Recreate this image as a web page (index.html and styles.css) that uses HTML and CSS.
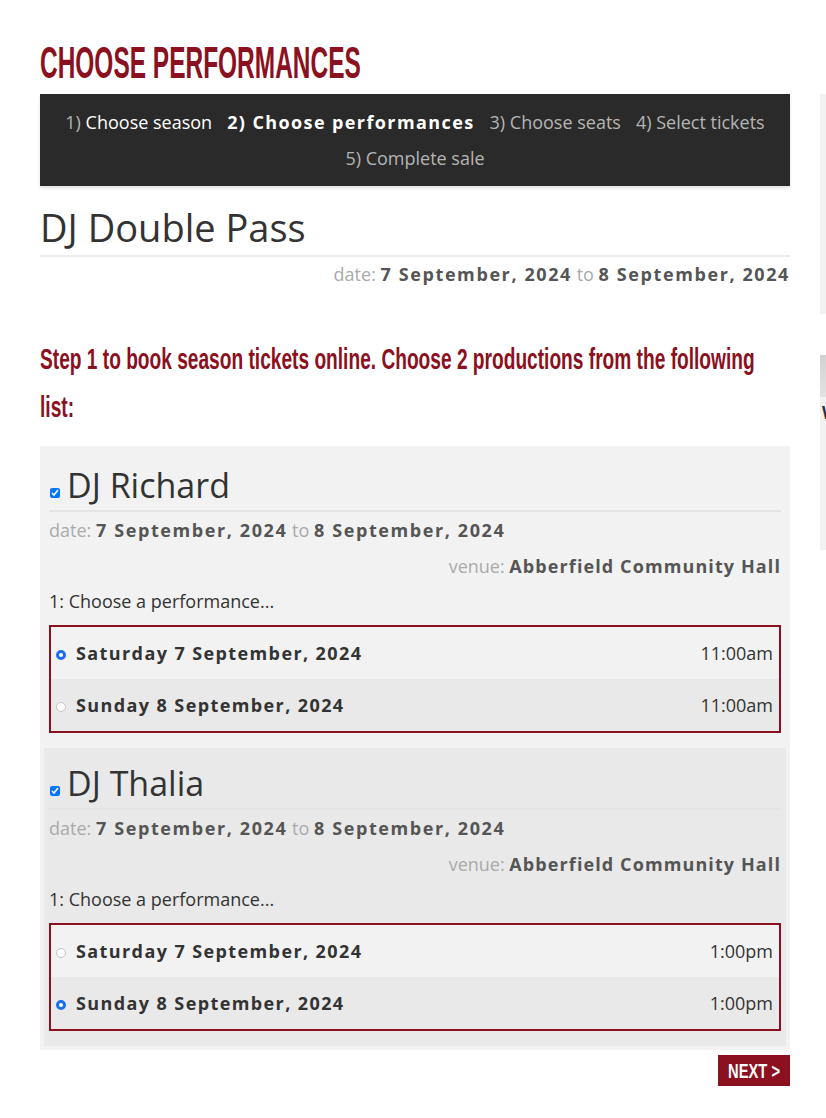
FILE: index.html
```html
<!DOCTYPE html>
<html lang="en">
<head>
    <meta charset="UTF-8">
    <meta name="viewport" content="width=device-width, initial-scale=1.0">
    <title>Choose performances</title>
    <link rel="stylesheet" href="styles.css">
</head>
<body>
    <div class="page">
        <main class="content">
            <h1 class="page-title"><span>Choose performances</span></h1>

            <nav class="steps">
                <span class="step done"><span class="num">1)</span> Choose season</span>
                <span class="step current">2) Choose performances</span>
                <span class="step">3) Choose seats</span>
                <span class="step">4) Select tickets</span>
                <span class="step">5) Complete sale</span>
            </nav>

            <h2 class="season-title">DJ Double Pass</h2>
            <p class="meta season-dates"><span class="label">date:</span> <b>7 September, 2024</b> <span class="label">to</span> <b>8 September, 2024</b></p>

            <p class="intro">Step 1 to book season tickets online. Choose 2 productions from the following list:</p>

            <form class="productions">
                <div class="production">
                    <h3 class="production-title"><input type="checkbox" checked>DJ Richard</h3>
                    <p class="meta"><span class="label">date:</span> <b>7 September, 2024</b> <span class="label">to</span> <b>8 September, 2024</b></p>
                    <p class="meta venue"><span class="label">venue:</span> <b>Abberfield Community Hall</b></p>
                    <p class="choose">1: Choose a performance...</p>
                    <div class="performances">
                        <label class="performance">
                            <input type="radio" name="richard" checked>
                            <span class="day">Saturday 7 September, 2024</span>
                            <span class="time">11:00am</span>
                        </label>
                        <label class="performance">
                            <input type="radio" name="richard">
                            <span class="day">Sunday 8 September, 2024</span>
                            <span class="time">11:00am</span>
                        </label>
                    </div>
                </div>

                <div class="production">
                    <h3 class="production-title"><input type="checkbox" checked>DJ Thalia</h3>
                    <p class="meta"><span class="label">date:</span> <b>7 September, 2024</b> <span class="label">to</span> <b>8 September, 2024</b></p>
                    <p class="meta venue"><span class="label">venue:</span> <b>Abberfield Community Hall</b></p>
                    <p class="choose">1: Choose a performance...</p>
                    <div class="performances">
                        <label class="performance">
                            <input type="radio" name="thalia">
                            <span class="day">Saturday 7 September, 2024</span>
                            <span class="time">1:00pm</span>
                        </label>
                        <label class="performance">
                            <input type="radio" name="thalia" checked>
                            <span class="day">Sunday 8 September, 2024</span>
                            <span class="time">1:00pm</span>
                        </label>
                    </div>
                </div>
            </form>

            <div class="actions">
                <button class="next" type="button"><span>Next &gt;</span></button>
            </div>
        </main>

        <aside class="sidebar">
            <div class="widget widget-tall"></div>
            <div class="widget widget-news">
                <div class="widget-image"></div>
                <h4>What's on</h4>
            </div>
        </aside>
    </div>
</body>
</html>
```

FILE: styles.css
```css
:root {
    --brand: #8b1020;
    --ink: #333;
    --muted: #aaa;
    --strong: #555;
    --panel: #f2f2f2;
    --panel-alt: #e9e9e9;
    --radio: #1a6ff0;
    --condensed: "Liberation Sans", Arial, sans-serif;
}

body {
    margin: 0;
    background: #fff;
    color: var(--ink);
    font-family: "Open Sans", "Noto Sans", sans-serif;
    font-size: 18px;
    overflow: hidden;
}

.page {
    display: flex;
    gap: 30px;
    padding-left: 40px;
}

.content {
    flex: 0 0 750px;
    width: 750px;
}

/* no condensed face installed, so the display type is squeezed */
.page-title {
    margin: 37px 0 5px;
    color: var(--brand);
    font: bold 44px/52px var(--condensed);
    text-transform: uppercase;
    white-space: nowrap;
}

.page-title span {
    display: inline-block;
    transform: scaleX(0.556);
    transform-origin: left center;
}

.steps {
    display: flex;
    flex-wrap: wrap;
    justify-content: center;
    column-gap: 15px;
    padding: 10px 15px;
    background: #2a2a2a;
    color: #b5b5b5;
    line-height: 36px;
    box-shadow: 0 2px 3px rgba(0, 0, 0, 0.12);
}

.step {
    white-space: nowrap;
}

.step.done {
    color: #fff;
}

.step.done .num {
    color: #b5b5b5;
}

.step.current {
    color: #fff;
    font-weight: 700;
    letter-spacing: 1.4px;
}

.season-title {
    margin: 20px 0 0;
    padding-bottom: 6px;
    border-bottom: 2px solid #ebebeb;
    font-size: 38px;
    font-weight: 400;
    line-height: 43px;
}

.meta {
    margin: 0;
    line-height: 36px;
    color: var(--muted);
}

.meta b {
    color: var(--strong);
    letter-spacing: 1.6px;
}

.season-dates {
    line-height: 34px;
    text-align: right;
}

.venue {
    text-align: right;
}

.venue b {
    letter-spacing: 1.1px;
}

.intro {
    width: 1100px;
    margin: 44px 0 15px;
    color: var(--brand);
    font: bold 29px/48px var(--condensed);
    transform: scaleX(0.66);
    transform-origin: left top;
}

.productions {
    padding: 4px;
    background: var(--panel);
}

.production {
    padding: 13px 5px 15px;
}

.production:nth-child(even) {
    background: var(--panel-alt);
}

.production-title {
    margin: 0;
    padding-bottom: 2px;
    border-bottom: 2px solid #e4e4e4;
    font-size: 34px;
    font-weight: 400;
    line-height: 45px;
}

.production-title input {
    width: 10px;
    height: 10px;
    margin: 0 7px 0 1px;
}

.choose {
    margin: 0 0 7px;
    line-height: 34px;
}

.performances {
    border: 2px solid var(--brand);
}

.performance {
    display: flex;
    align-items: center;
    height: 52px;
    padding: 0 6px 0 5px;
    background: var(--panel);
}

.performance:nth-child(even) {
    background: var(--panel-alt);
}

.performance input {
    appearance: none;
    box-sizing: border-box;
    width: 10px;
    height: 10px;
    margin: 4px 10px 0 0;
    border: 1px solid #c4c4c4;
    border-radius: 50%;
    background: #fff;
}

.performance input:checked {
    border: 3px solid var(--radio);
}

.performance .day {
    flex: 1;
    font-weight: 700;
    letter-spacing: 1.4px;
}

.actions {
    display: flex;
    justify-content: flex-end;
    padding-top: 5px;
}

.next {
    display: flex;
    align-items: center;
    justify-content: center;
    width: 72px;
    height: 31px;
    padding: 0;
    border: 0;
    background: var(--brand);
    color: #fff;
    font: bold 21px/1 var(--condensed);
    text-transform: uppercase;
    white-space: nowrap;
    cursor: pointer;
}

.next span {
    display: inline-block;
    transform: scaleX(0.7);
}

.sidebar {
    flex: 0 0 260px;
    padding-top: 94px;
}

.widget {
    background: var(--panel);
}

.widget-tall {
    height: 220px;
    margin-bottom: 41px;
}

.widget-news {
    height: 195px;
}

.widget-image {
    height: 42px;
    background: linear-gradient(#d2d2d2, #e2e2e2);
}

.widget h4 {
    margin: 4px 0 0;
    padding: 0 2px;
    color: var(--ink);
    font-size: 17px;
    font-weight: 700;
}
```
